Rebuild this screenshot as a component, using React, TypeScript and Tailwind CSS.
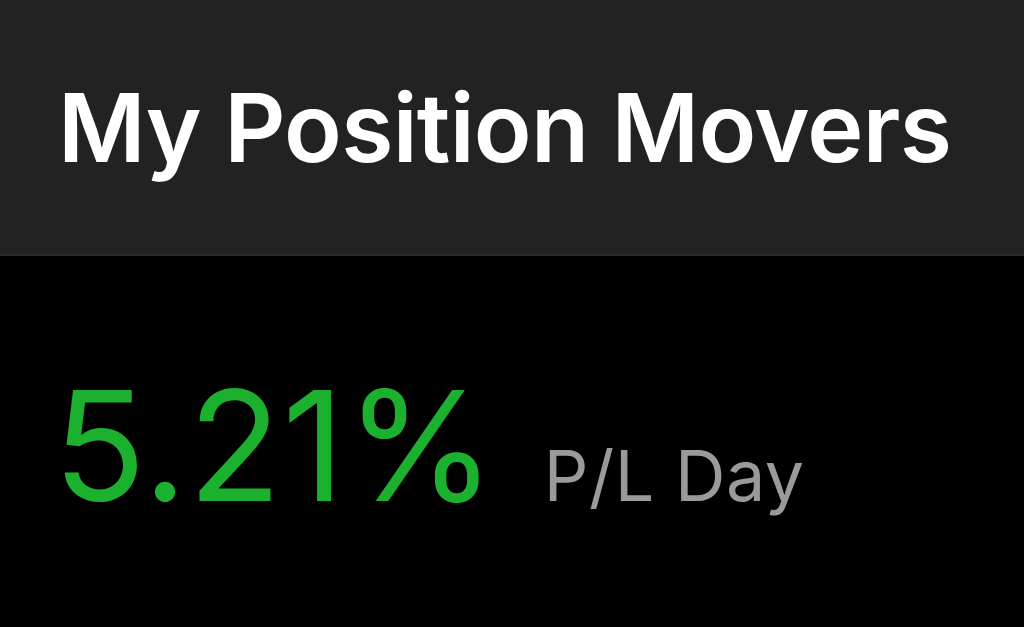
export default function App() {
  return (
    <div className="w-[1024px] h-[627px] bg-black overflow-hidden" style={{ fontFamily: "Inter, 'Noto Sans', sans-serif" }}>
      <div className="h-[256px] bg-[#222222] border-b-2 border-[#2a2a2a] flex items-center pl-[58px]">
        <h1 className="text-[95px] font-semibold text-white leading-none tracking-[-0.7px]">My Position Movers</h1>
      </div>
      <div className="flex items-baseline pl-[53px] pt-[113px]">
        <span className="text-[153px] leading-none text-[#1bb02e] font-normal tracking-[1px]">5.21%</span>
        <span className="ml-[47px] text-[70px] leading-none text-[#9a9a9a] font-normal tracking-[0.5px]">P/L Day</span>
      </div>
    </div>
  );
}
